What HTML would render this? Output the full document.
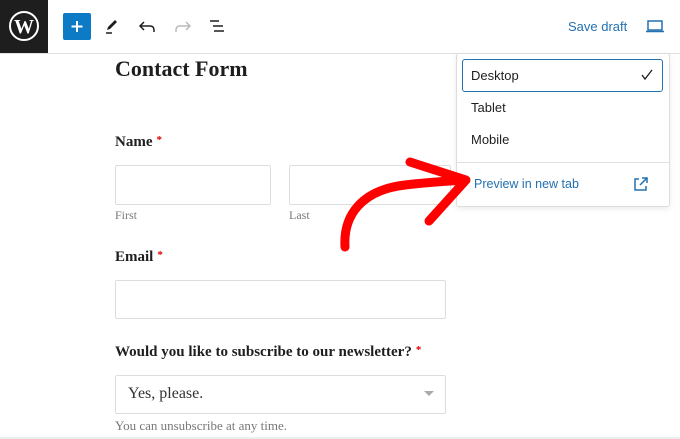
<!DOCTYPE html>
<html><head><style>
body{margin:0;width:680px;height:439px;overflow:hidden;background:#fff;font-family:"Liberation Sans",sans-serif;position:relative}
.a{position:absolute}
.serif{font-family:"Liberation Serif",serif;color:#1e1e1e}
.inp{position:absolute;border:1px solid #ddd;border-radius:2px;background:#fff}
.lab{font-weight:bold;font-size:15px}
.st{color:#d00;font-size:11px;vertical-align:top;margin-left:4px}
.sub{font-size:12px;color:#777}
</style></head><body>
<div class="a" style="left:0;top:53px;width:680px;height:1px;background:#e0e0e0"></div>
<div class="a" style="left:0;top:0;width:48px;height:53px;background:#1e1e1e"></div>
<svg class="a" style="left:8px;top:10px" width="32" height="32" viewBox="0 0 32 32"><circle cx="16" cy="16" r="14" fill="none" stroke="#fff" stroke-width="2"/><text x="16" y="23" font-family="Liberation Serif" font-size="20" font-weight="bold" fill="#fff" text-anchor="middle">W</text></svg>
<div class="a" style="left:63px;top:13px;width:28px;height:27px;background:#0d7ac5;border-radius:2px"></div>
<svg class="a" style="left:63px;top:13px" width="28" height="27"><path d="M14 8v11M8.5 13.5h11" stroke="#fff" stroke-width="2"/></svg>
<svg class="a" style="left:100px;top:14px" width="24" height="24"><path d="M7 16l1-3 7-7 2 2-7 7z" fill="#1e1e1e"/><path d="M6 19h6" stroke="#1e1e1e" stroke-width="1.5"/></svg>
<svg class="a" style="left:136px;top:14px" width="24" height="24"><path d="M8 8l-4 4 4 4M4 12h10c3 0 4 2 4 4v2" fill="none" stroke="#1e1e1e" stroke-width="1.5"/></svg>
<svg class="a" style="left:170px;top:14px" width="24" height="24"><path d="M16 8l4 4-4 4M20 12H10c-3 0-4 2-4 4v2" fill="none" stroke="#bbb" stroke-width="1.5"/></svg>
<svg class="a" style="left:205px;top:14px" width="24" height="24"><path d="M5 7h9M8 12h10M9 17h10" stroke="#1e1e1e" stroke-width="1.5"/></svg>
<div class="a" style="left:568px;top:19px;font-size:13px;color:#2271b1">Save draft</div>
<svg class="a" style="left:644px;top:16px" width="22" height="20"><rect x="4" y="5" width="14" height="9" fill="none" stroke="#2271b1" stroke-width="1.5"/><path d="M2 15.5h18" stroke="#2271b1" stroke-width="1.5"/></svg>

<div class="a serif" style="left:115px;top:56px;font-size:22px;font-weight:bold">Contact Form</div>
<div class="a serif lab" style="left:115px;top:134px">Name<span class="st">*</span></div>
<div class="inp" style="left:115px;top:165px;width:154px;height:38px"></div>
<div class="inp" style="left:289px;top:165px;width:160px;height:38px"></div>
<div class="a serif sub" style="left:115px;top:208px">First</div>
<div class="a serif sub" style="left:289px;top:208px">Last</div>
<div class="a serif lab" style="left:115px;top:249px">Email<span class="st">*</span></div>
<div class="inp" style="left:115px;top:280px;width:329px;height:37px"></div>
<div class="a serif lab" style="left:115px;top:344px">Would you like to subscribe to our newsletter?<span class="st">*</span></div>
<div class="inp" style="left:115px;top:375px;width:329px;height:37px"></div>
<div class="a serif" style="left:128px;top:385px;font-size:16px;color:#333">Yes, please.</div>
<svg class="a" style="left:424px;top:391px" width="10" height="6"><path d="M0 0h10L5 5z" fill="#aaa"/></svg>
<div class="a serif sub" style="left:115px;top:418px;font-size:13px">You can unsubscribe at any time.</div>
<div class="a" style="left:0;top:437px;width:680px;height:2px;background:#eee"></div>

<div class="a" style="left:456px;top:53px;width:212px;height:152px;background:#fff;border:1px solid #ddd;border-radius:3px;box-shadow:0 2px 6px rgba(0,0,0,.08)"></div>
<div class="a" style="left:462px;top:59px;width:199px;height:31px;border:1.5px solid #2271b1;border-radius:3px"></div>
<div class="a" style="left:471px;top:68px;font-size:13px;color:#1e1e1e">Desktop</div>
<svg class="a" style="left:640px;top:68px" width="14" height="14"><path d="M2 7l3 4 7-9" fill="none" stroke="#1e1e1e" stroke-width="1.3"/></svg>
<div class="a" style="left:471px;top:100px;font-size:13px;color:#1e1e1e">Tablet</div>
<div class="a" style="left:471px;top:132px;font-size:13px;color:#1e1e1e">Mobile</div>
<div class="a" style="left:456px;top:162px;width:213px;height:1px;background:#e0e0e0"></div>
<div class="a" style="left:474px;top:177px;font-size:12.5px;color:#2271b1">Preview in new tab</div>
<svg class="a" style="left:633px;top:176px" width="16" height="16"><path d="M6 3H2v11h11v-4M9 2h5v5M14 2L7 9" fill="none" stroke="#2271b1" stroke-width="1.5"/></svg>

<svg class="a" style="left:0;top:0" width="680" height="439"><path d="M345 247C343 215 362 190 405 185C430 182 450 181 465 180" fill="none" stroke="#f00" stroke-width="9" stroke-linecap="round"/><path d="M410 162L466 180L429 221" fill="none" stroke="#f00" stroke-width="9" stroke-linecap="round" stroke-linejoin="round"/></svg>
</body></html>
